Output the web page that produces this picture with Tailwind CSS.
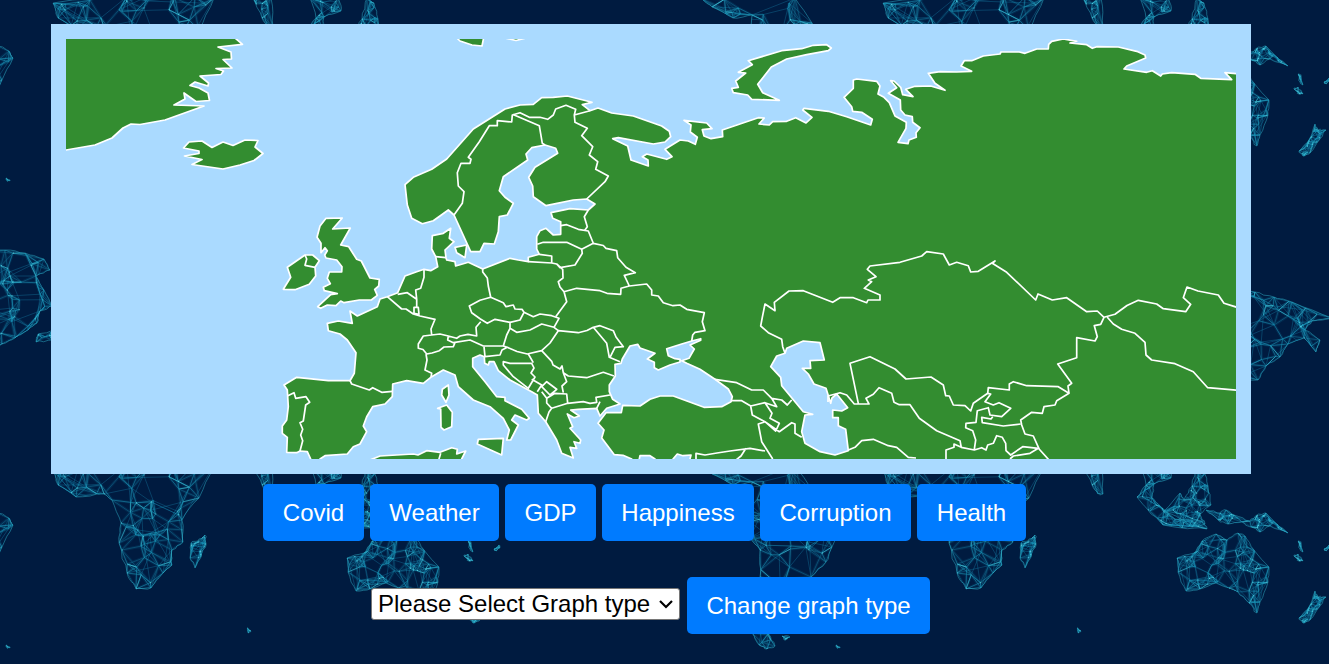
<!DOCTYPE html>
<html lang="en">
<head>
<meta charset="utf-8">
<title>World data map</title>
<script src="https://cdn.jsdelivr.net/npm/@tailwindcss/browser@4"></script>
</head>
<body class="relative h-[664px] overflow-hidden bg-[#001b40] font-['Liberation_Sans',Arial,sans-serif] text-2xl">
<svg class="absolute inset-0 h-full w-full" viewBox="0 0 1329 664" aria-hidden="true">
  <defs><g id="world"></g></defs>
  <use href="#world"/><use href="#world" x="830"/><use href="#world" x="-830"/>
  <use href="#world" y="-467"/><use href="#world" x="830" y="-467"/><use href="#world" x="-830" y="-467"/>
</svg>
<main class="relative pt-6">
  <svg class="ml-[51px] block h-[450px] w-[1200px] bg-[#aadaff]" viewBox="51 24 1200 450" role="img" aria-label="Map">
    <defs><clipPath id="frame"><rect x="66" y="39" width="1170" height="420"/></clipPath></defs>
    <g clip-path="url(#frame)" fill="#338d30" stroke="#fff" stroke-width="1.7" stroke-linejoin="round">
      <!-- mainland -->
      <path d="M454,215 448.3,210 433.3,220.7 422.3,223.7 411.7,218.3 407.3,205 405,184.7 413.3,177.3 431.7,169.3 446.7,159 473.3,129 505,109 520,105 533.3,104.3 541.7,97.7 553.3,97.3 567.3,96 592,102.3 582.3,104.7 590,110.7 598,108 611.7,113 633.3,116 661.7,126 669.3,131.3 670.7,136.7 665,142 653.3,144 618.3,137.7 612.7,138.7 627.7,146 631,160 648.3,166 648,160 642.3,156.7 646.7,154 666.7,159.3 672,156.7 665,149.3 680,140 688.3,141 695.3,144.3 697.3,137.3 690.3,132 691,125 684,120.3 706.7,123 712,128.7 702.3,129.7 704,136 711,138.7 722.7,136.7 722.3,130 758.3,117.7 764.3,118 759,124 769.3,125 772.7,121.7 786.7,121.3 795.7,117.7 806,123 812,117.3 802.7,110 804,108.3 828.3,111.3 846.7,116.7 870.7,125 872.3,119.3 861.7,112.3 852.7,111.3 851.7,106.7 844,97.3 853.3,88.3 853.3,80 856.7,79 876.7,81.3 880,86 878,94 884,97.3 889.3,102.7 895,116 906.3,122.3 906,128.3 898,142.3 908,143.7 909,140 916.3,137.3 916,132.7 920,127.7 912.7,122.3 912.3,116.7 905,115 900.7,110 900.3,100 888.3,93.3 896.7,87.7 890.7,80.7 894,81 900.7,87.3 902.7,94.7 913,96.7 905.7,89.3 915,86.3 930.7,86 945,90.3 935,83.3 928.3,73.3 940,71.7 956.7,72 971.7,71.3 961,66 964.3,60.7 971.7,60.7 983.3,56 1000,54 1001,52 1019.3,52 1025,53.3 1036.7,49 1048.3,49 1048.7,44.3 1051.7,41.3 1063.3,39 1076.7,41.3 1070,43 1086.7,44.7 1092.3,48.3 1096.7,46.7 1118.3,47 1136.7,51.3 1145,55 1145.7,58 1126.7,66 1124,69 1146.7,72.3 1152.3,70.7 1160.7,76 1162.3,74 1171.7,72.7 1195,74.3 1200.7,78.3 1231.7,79.7 1225,72.7 1236.7,73.7 1260,74 1260,490 691,490 690,459 691,455 683,455.7 677.3,454 673,459 672,480 656,480 655,459 650,455.7 640,455.7 639.3,459 639,480 632,480 631.7,459 623,455.3 614.3,454.7 601.7,438 604,430 598,423.3 606,412.7 621.3,412.7 622.7,405.3 640,406 650,399.3 660,396 673.3,396 704,407.3 721.7,406.7 731,401.7 732.3,396.7 728.3,389 715,379.3 700,369.3 686.7,363.3 681.7,360.7 689,358.3 694.3,349 690,345 700.7,340.3 700.7,338.7 691.7,341 681.7,344 666.7,348.7 668.3,355.7 675,358.7 680,359.3 680,362 670,365 658.3,370 654.3,367.7 654.3,362.3 647.3,359 655,353.3 640,348 637.7,344.3 630,346 622.3,359 621,363.3 615,364.3 615.3,376 609.3,385 609.3,391.7 612.7,399.3 620,404 606.7,408.3 600,416 596.7,408.3 578.3,409.3 570.7,410 579.3,416 574,417.7 567.3,414 572.7,426.7 570,428.3 580.7,440 580,443.3 574,441.7 576.7,448.3 570,447.3 573.3,458 561.7,453.3 556.7,440 545.7,421.7 538.3,413.3 537.3,395 531.7,391.7 510,380 498.3,370.7 494,361.7 489.3,361.7 488.3,365 484.7,363.3 484.3,356.7 480,355 472.7,358.3 472.7,366.7 485,381.7 496.7,396.7 505,397.3 505,400.7 521.7,409.3 529.3,418.3 526.7,420 515,415 511.7,420 518.3,425 510.7,440 506.7,440 509.3,430 503.3,418.3 490,406.7 473.3,400 458.3,386.7 455,375 443.3,370 431.7,376.7 423.3,383.3 406.7,380.7 392.7,384 392.3,396.7 385,404 372.7,406.7 366.7,416.7 363.3,426 366.7,431.7 360,444 353.3,446.7 347.3,454 325,455.7 320,459 318,480 312,480 310.7,459 307.3,451.7 300,451 296.7,452.7 286.7,452.3 287.3,437.3 282.3,433.3 282.3,426 286.7,420 288.3,406.7 287.3,390 284,385 296.7,377.3 328.3,380.7 350,380.7 354.3,373.3 356,352.7 347.3,340 340,334 328.3,330.7 327.3,323.3 338.3,321 352.3,323.3 350,311 357.3,316 377.3,306.7 380,299 387.3,296.7 397.7,292.7 405,276 416.7,271.7 424,269.3 430.7,270.7 437.7,266.7 435.7,256.7 431.7,249 432.3,235.7 443.3,233.3 450.7,228.3 449.3,238.3 454,241.7 445,250 446,257.7 446.7,260 455,261.7 455.7,266 468.3,262.3 482.7,269 510,258.3 518.3,260 528.3,261.7 528.3,257.3 539.3,254.3 536.7,249 536.7,236.7 540,230.7 546,228.3 553.3,235 560.7,234.3 560.7,221.7 552.7,218.3 551,212.7 570,208.7 588.3,210 595,204 586.7,199 573.3,200 546,205.7 533.3,196.7 532.7,186 528.7,177.3 535,167.3 557.7,153.3 555.7,148.3 545,145 531.7,147.7 526,154 527.7,160 503.3,176.7 499.3,190.7 505,197.3 513.3,203.3 507.3,215 499.3,216.7 498.3,231.7 494.3,244 484,243.3 480,251.7 470.7,251.7Z"/>
      <!-- Greenland, Iceland, Svalbard, Novaya Zemlya -->
      <path d="M235,38 242.5,44.3 218,47 231,52 231.5,59 223,59.5 232,68 216,68.5 223.5,71 221,74.5 200,76 208.5,83 208,86 195,82 190,85.5 199,88 208,93 209.5,100.5 196,101.5 184,93 185,99 174,105 204,106 165,120 140,124.5 131,124 123,128 112,138 95,145 66,150 50,155 50,30ZM183.5,148 189,142 202,141 212,147.5 223,142 233,145.5 245,140 258,140.5 255,147 263,153.5 254,160.5 240,165 223,169 192,164.5 202,159.5 184.5,156 199,153.5 199,151ZM455,36 460,41 472,45 482,46 484,36ZM505,38 516,40.500 526,38Z"/>
      <path d="M748.3,60.7 781.7,50.7 801.7,48.7 813.3,45.3 826.7,44.7 831.3,48 828.3,50.7 806.7,54.7 786.7,59 771.3,67 757.7,84.3 762.7,92.7 779.3,100.3 751.7,99.3 747.7,95 733.3,92.7 731.7,88.3 738.3,87.3 735.7,81 745.7,73 738.3,72.3 752.3,64.700Z"/>
      <!-- Ireland and Britain -->
      <path d="M283.3,289.3 290.7,277.3 287.3,267.3 305,255 312.7,255 319.3,260.7 315,267.3 315.7,276 309.3,284.3 295,289.7ZM326,218.3 342.3,218 332.7,229 350.3,228 340.7,245 348.7,246.7 356.7,259.3 361.3,261 370,278 379.3,279.3 378.7,286 374.7,289.3 377.3,295.3 371.3,300 359.3,300 344,302.7 340.7,301 336,305.7 327.3,305 320.7,308.3 317.7,306.7 330.7,294.7 337.3,293.7 324.3,290.7 323.3,287.3 330.3,283.7 327.3,278.3 329.3,272 341.7,272 342,266.7 336.7,260 326,258 324.7,255 327.3,250.7 325,247.7 321,252.7 321,243.3 317,237.3 320,226Z"/>
      <!-- Zealand, Corsica, Sardinia, Sicily, North Africa -->
      <path d="M455,247.3 466.7,245 465,257.7 456.7,252.7ZM448.3,385 449,395 446,402.3 441.7,395 442.3,389.3ZM446.7,405 452.3,412.3 451.7,426.7 444,430 441,427.3 440.7,409 437.7,408.3ZM478.3,439.3 503.3,438.3 501.7,455 477.3,444ZM370,460 380,456 413.3,454 418,455 426.7,450.7 440,452.3 451.7,447.7 457.3,449.3 456.7,454 465.7,451 461.7,459 460,480 370,480Z"/>
      <!-- Caspian Sea -->
      <g fill="#aadaff">
        <path d="M786.7,348.3 803.3,341 820,342.7 824.3,360 810,360.7 810.7,368.3 802.3,368.3 808.3,374 814,384 826,388.3 830.7,403.3 832,398 836.7,394 847.7,407.7 841.7,411 832.7,410 832.7,417.7 838.3,417.7 838.3,425.7 845.7,429.3 848.3,450.7 835,455 820,451.7 805,443.3 801.7,431.7 805,415 812.7,414.3 803.3,411.7 781.7,385.7 780.7,377.3 770.7,366.7 776.7,356 785,353.300Z"/>
      </g>
      <!-- borders -->
      <g fill="none">
        <path d="M305,255 306.7,259 305,265.3 315,267.3"/>
        <path d="M454,215 462.3,203.3 464,191.7 458.3,186 457.3,172.7 461,163.3 470,163.3 471,159.3 468.3,157.3 479.3,141.7 489.3,125.7 497.3,125.7 497.3,120.7 511.7,122 512.3,115 520,112.7 529.3,117.3 540,117.3 547.7,119.3 553.3,115 555.7,109 566,105.3 575.7,109.3 574.3,115 590,110.7M513,114.500 539.3,125.7 542.3,143.3 545,145M574.3,115 575,122.3 587.3,128.3 581.7,135.7 592.7,146.7 589.3,155 597.7,161.7 595.7,169.3 608.3,176 605,181.7 586.7,199"/>
        <path d="M588.3,210 584.3,216.7 587.3,226.7 585,230M560.7,225.7 566.7,224.7 578.3,229.3 588.3,231 593.3,243.3M537.3,244.3 543.3,242.3 566.7,242.3 581.7,249.3 593.3,243.3 603.3,245.5 606,248.3 616.7,250.7 617.7,257.7 626,267.3 635.3,272.7 624.3,275.3 629.3,286M581.7,249.3 582.3,253.3 575,265 560,267.7 556.7,264M528.3,261.7 551.7,263 556.7,264 562.7,269.3 563,278 558.3,281.7 560,287 564,291.7 566.7,301.7 555.7,316.7M539.3,254.3 551.7,256 551.7,263M564,291.7 576.7,288.3 600,290.700 607,293.300 620.7,294.3 621,288.3 629.3,286 646.7,284 651.7,290 651.7,295 658.3,296 663.3,302.7 673,305.700 680,305 686.7,309.3 704.3,312.7 702.3,321.7 705,330.7 695,332.300 692.7,335 691.7,341"/>
        <path d="M435.7,256.7 446,257.7M482.7,269 482.7,272 487.3,278 488.3,286 490.7,297.3 503.3,302.7 506,306.7 513.3,305 515,309 522,309.300 524,312.3 533.3,316.7 540,314 551.7,315.7 559,318.3 554,327.3M490.7,297.3 480,300.300 469.3,306 471.7,312.7 480,318.700 487.3,323.3 495,319.3 510,322.3 520,320 524,312.3M510,322.3 510,328.3 516.7,332.3 530,330 541.7,324 554,327.3 558.3,330.7M480.7,321.7 476,327.3 476.7,336 468,334.300 460,336 456.7,338.3 448.3,336 447.7,340 453.3,342.7 470,340 483.3,346 503.3,346 506.7,335 510,328.3M448.3,336 440,334 431.7,335 423.3,336 418.3,344 418.3,348.3 423,349.500 426.7,354 432,353 439.3,350.7 444,347 453.3,346.7 455,342.7M431.7,335 431,329 435,319.3 420,316 413.3,314 406,309 401.7,309 387.3,296.7M397.7,294.3 407.3,292.7 416.7,299.3 415.7,290 420.7,288.3 424,277.3 424,269.3M416.7,299.3 416.7,307.3M414,307.3 418.3,307.3 419,314.3 414,313.3ZM426,354 427,360 425,370 431.7,373.3 431,377M350,380.7 351.7,384 369.3,390 372.7,387.7 381.7,392.3 392.3,391.3M287.3,396 294,392.7 295.7,398.3 306,396.7 309.7,402.3 305.7,405 303.3,421 300,422.7 302.7,429.3 300.7,435 302.7,440.7 300,451"/>
        <path d="M484,346.7 485,356.7 500,355 502,350 507.3,347.3 503.3,346M507.3,347.3 517,351.500 527.3,354 541.7,350.7 550,343 558.3,330.7 578.3,332.7 587,330.500 593.3,327.3 606.7,343.3 609.3,357.3 620,361.7M503.3,361.7 510,363.300 531.7,363.3 534,368 531,373 535,377 528.3,388.3 513.3,376.7 503.3,365ZM528.3,354 533.3,362.7M541.7,350.7 551.7,361.3 553,365 560,369 562,366 563.3,372.7 566.7,381.7 562,386 563.3,392.7M563.3,372.7 568.3,376 586.7,377.7 603.3,372.3 614,376M541.7,386.7 546.7,381.7 556.7,389.3 550,395ZM531.7,379.3 541.7,385 537.3,391.7M546.7,398.3 555,393.3 566.7,394 567.7,403.3 551.7,408.3 546.7,403ZM541.7,391.7 546.7,398.3M551.700,408.3 549,412 545.7,421.7M567.7,403.3 583.3,401.7 590,403.3 596.7,402.3 596,397.3 610,395M600,401.7 596.7,408.3M593.3,327.3 600,325.7 613.3,330.7 616,337 623.3,346.7 615,347.3 610,357.3"/>
        <path d="M715,379.3 736.7,382.7 751.7,390 763.3,390 771.7,398.3 781.7,400 787.3,405 791.7,400M731,400.7 741.7,400.7 750.7,406 765,402.7 776.7,406.7 771.7,398.3M750.7,406 752.3,415 765,421.7 775.7,431 779.3,423.3 770,418.300 772,413.3 765,402.7M765,421.7 779.3,431.7 791.7,422.7 795,424 795,433.3 801.7,437.3M765,421.7 758.3,424 761.7,441.7 772.7,459M696,460 696,453.3 705,455 717,453 730,451 750,448.3 765,451M736,460 741,456 746,448.3M440.7,453.3 438.7,460"/>
        <path d="M785,353.3 782.7,346.7 781.7,339.3 768.3,332.7 760.7,326 762.3,317.3 765,304 775,310.7 774.3,302.3 789,291 803.3,290.7 832.7,302.3 840,297.7 853.3,297.7 866.7,302.7 868,300 880,300 880,295 864.3,288.3 871.7,281.7 868.3,280 876,276.7 867.3,269.3 870,266 900,262.3 921.7,256 926.7,251.7 943.3,254 949.3,265 956.7,262.3 968.3,265.7 970.7,272 978.3,271.3 995,261 992.3,263.3 1006.7,272.3 1035.7,300 1038,294 1052.3,300 1066.7,297.7 1086.7,311.7 1097.3,311 1104,317.3 1115,314.3 1127,305.500 1138.3,300.3 1156.7,304 1163.3,308.7 1185.7,311.7 1190.7,304.3 1183.3,297.7 1187,287 1198,291 1218.3,295 1224,303.3 1237,307.3M1104,317.3 1100.7,324.3 1094.3,325.7 1097.3,336.7 1095,341 1076.7,337.7 1076.7,357.7 1057.7,364 1071.7,383.3 1068,386 1069,393.3 1056.700,400.7 1055,405 1044,406.7 1042.3,413.3 1031.7,412.3 1020.7,420 1021.7,425 1025,434 1033.3,436 1039.3,449.3 1049,460M1107.3,317.3 1113.3,324 1121.7,329.3 1135,333.3 1145,342.3 1146,355 1151.7,360 1175,363.7 1193.3,371.7 1207.7,387.7 1237,390.3"/>
        <path d="M1069,393.3 1058.3,386.7 1026.7,385.7 1013.3,381.7 1009.3,384 1009.3,390 988.3,387.7 987.7,393.3 973.3,403.3 970.7,411 965,405.7 953.3,405 949.3,396 945.7,395.7 943.3,385 931,377 906,379 895,369 870,356.7 850,363.3 858.3,403.3M987.7,393.3 990.7,394 985,401.7 993.3,405 999,402.7 1010.7,408.3 1001.7,416.7 990,415 988.3,407.7 977.3,410.7 976,422.3 966,423.3 965.7,427.7 972.7,430.7 975.7,440 974.3,449.3M992.7,416.7 991,419 981.7,417.3 982.3,422.7 1003.3,426 1020.7,424M828,402 828,396 840,392.7 846.7,395 854.3,404 869,404 866,398.3 873.3,394.3 879,387.7 891.7,393.3 894,402.3 899.3,404.7 910,404.7 919.3,418.3 936.7,430.7 960,440.7 961.3,447.3M946,460 946,450 954,447.3 954,444 961.3,447.3 974.3,450 981.7,447.7 986,450 987.7,445 993.3,443.3 996.7,435.7 1002.3,437.3 1005.7,443.3 1006,450.7 1010.7,455 1022.7,446.7 1038.3,448.3 1030,453.3 1013.3,456 1010,459M848.3,450 855,447.3 861.7,440.7 873.3,439.3 888.3,445.7 896.7,447.3 908.3,457.3 916,458"/>
      </g>
    </g>
  </svg>
  <nav class="ml-[263px] mt-2.5 flex h-[57px] gap-1.5 text-white">
    <button class="w-[101px] rounded-[5px] bg-[#007bff]">Covid</button>
    <button class="w-[129px] rounded-[5px] bg-[#007bff]">Weather</button>
    <button class="w-[91px] rounded-[5px] bg-[#007bff]">GDP</button>
    <button class="w-[152px] rounded-[5px] bg-[#007bff]">Happiness</button>
    <button class="w-[151px] rounded-[5px] bg-[#007bff]">Corruption</button>
    <button class="w-[109px] rounded-[5px] bg-[#007bff]">Health</button>
  </nav>
  <div class="ml-[371px] mt-9 flex h-[57px] gap-[7px]">
    <div class="mt-[11px] flex h-8 w-[309px] items-center justify-between rounded-[3px] border border-[#767676] bg-white pl-1.5 pr-[5px] leading-[30px] text-black">
      <span class="whitespace-nowrap">Please Select Graph type</span>
      <svg class="h-4 w-4 shrink-0" viewBox="0 0 16 16" fill="none" stroke="#000" stroke-width="2.200"><path d="M2 5l6 6 6-6"/></svg>
    </div>
    <button class="w-[243px] rounded-[5px] bg-[#007bff] text-white">Change graph type</button>
  </div>
</main>
<script>
// Network-style continents: every outline is filled with a seeded web of thin lines.
const lands = [
  [75, "53,470 58,485 76,497 104,494 112,500 121,523 119,543 127,573 136,589 151,588 163,573 172,565 172,550 183,542 182,520 199,498 214,465 130,460"],
  [20, "191,543 198,541 205,535 206,545 201,557 195,568 190,558"],
  [14, "253,465 262,485 268,494 273,494 271,465"],
  [40, "310,465 316,485 307,497 318,510 333,525 352,528 377,529 372,521 345,519 330,506 322,498 324,484 341,478 339,465"],
  [45, "334,511 350,493 354,500 362,486 367,465 374,470 378,486 381,505 370,514 375,524 362,527 350,519"],
  [35, "376,510 390,513 396,510 404,515 420,521 427,515 436,513 447,524 458,533 440,526 430,532 421,527 412,522 398,524 388,520"],
  [75, "347,558 364,553 372,541 386,534 397,540 408,533 415,536 424,550 439,567 438,582 430,602 427,613 419,603 408,592 386,583 370,589 356,591 348,572"],
  [22, "485,591 488,597 496,597 490,606 480,620 473,623 469,618 480,605"],
  [80, "700,465 712,474 733,485 752,482 748,510 750,538 760,550 760,577 755,605 752,633 759,645 767,649 775,646 768,633 779,610 795,595 811,577 826,562 832,547 843,525 839,518 826,512 812,490 795,465"],
  [100, "740,260 790,253 835,250 855,253 874,259 880,270 866,276 874,290 882,306 870,311 867,323 858,330 845,338 832,344 815,352 765,360"],
  [65, "380,285 425,292 444,297 462,302 502,318 482,321 475,330 490,340 486,352 474,338 458,344 450,357 436,366 428,380 395,384"],
  [8, "868,334 884,330 882,340 866,342"], [5, "464,556 468,554 473,561 469,561"], [4, "468,541 471,543 473,552 470,549"], [3, "494,549 499,545 500,547 496,551"],
  [3, "247,628 251,631 248,633"], [3, "782,636 790,637 785,640"], [3, "836,645 840,648 837,648"], [3, "472,620 478,619 474,623"]
];
const ns = 'http://www.w3.org/2000/svg', world = document.getElementById('world');
let seed = 17;
const rnd = () => (seed = (seed * 16807) % 2147483647) / 2147483647;
const inside = (x, y, p) => { let r = false; for (let i = 0, j = p.length - 1; i < p.length; j = i++) { const [a, b] = p[i], [c, d] = p[j]; if ((b > y) !== (d > y) && x < (c - a) * (y - b) / (d - b) + a) r = !r; } return r; };
const add = (d, color, op, w, parent) => { const e = document.createElementNS(ns, 'path'); e.setAttribute('d', d); e.setAttribute('fill', 'none'); e.setAttribute('stroke', color); e.setAttribute('stroke-opacity', op); e.setAttribute('stroke-width', w); parent.appendChild(e); };
lands.forEach(([n, s], k) => {
  const p = s.split(' ').map(v => v.split(',').map(Number));
  const xs = p.map(v => v[0]), ys = p.map(v => v[1]);
  const x0 = Math.min(...xs), y0 = Math.min(...ys), w = Math.max(...xs) - x0, h = Math.max(...ys) - y0;
  const cp = document.createElementNS(ns, 'clipPath'), pg = document.createElementNS(ns, 'path');
  cp.id = 'land' + k; pg.setAttribute('d', 'M' + s + 'Z'); cp.appendChild(pg); world.appendChild(cp);
  const g = document.createElementNS(ns, 'g'); g.setAttribute('clip-path', 'url(#land' + k + ')'); world.appendChild(g);
  const pts = p.slice(); let guard = 0;
  while (pts.length < n + p.length && guard++ < 5000) { const x = x0 + rnd() * w, y = y0 + rnd() * h; if (inside(x, y, p)) pts.push([x, y]); }
  let thin = '', lit = '', glow = '', dots = '';
  pts.forEach((a, i) => {
    const near = pts.map((b, j) => [Math.hypot(a[0] - b[0], a[1] - b[1]), j]).sort((m, o) => m[0] - o[0]);
    near.slice(1, 6).forEach(([, j]) => { thin += `M${a}L${pts[j]}`; });
    if (rnd() < .8 && near[19]) lit += `M${a}L${pts[near[8 + Math.floor(rnd() * 12)][1]]}`;
    if (rnd() < .3 && near[3]) glow += `M${a}L${pts[near[2][1]]}`;
    if (rnd() < .35) dots += `M${a}h1`;
  });
  add(thin, '#0c86ad', .15, 3, g);
  add(thin, '#1f93b6', .55, .6, g); add(lit, '#1b9cc4', .5, .6, g); add(glow, '#43c4d8', .5, 1, g); add(dots, '#7eeaf0', .6, 1.1, g);
  let edge = 'M' + p[0];
  p.forEach((a, i) => { const b = p[(i + 1) % p.length]; for (let t = 1; t <= 4; t++) { const q = t / 4, j = t < 4 ? 2 : 0; edge += `L${a[0] + (b[0] - a[0]) * q + (rnd() - .5) * j},${a[1] + (b[1] - a[1]) * q + (rnd() - .5) * j}`; } });
  add(edge, '#2ba3bd', .6, .9, world);
});
</script>
</body>
</html>
